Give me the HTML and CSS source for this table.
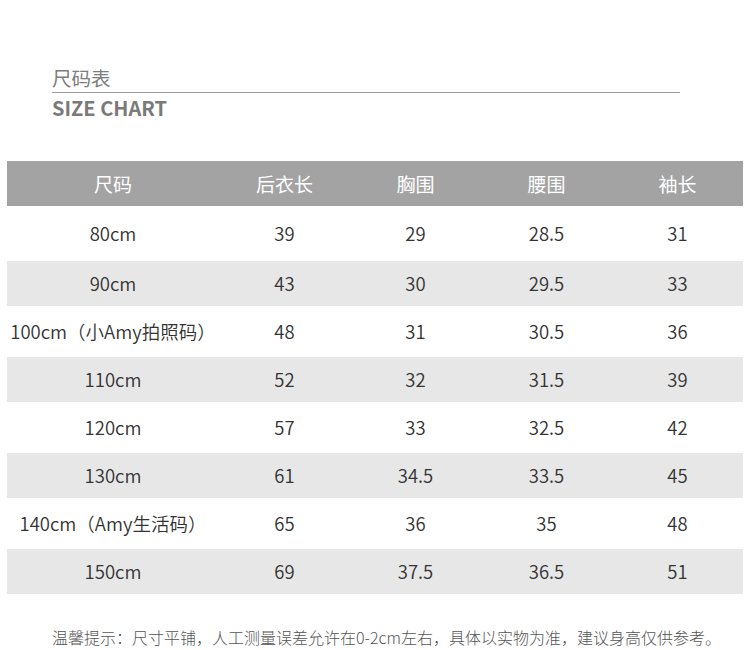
FILE: index.html
```html
<!DOCTYPE html>
<html lang="zh-CN">
<head>
<meta charset="utf-8">
<title>尺码表</title>
<link rel="stylesheet" href="styles.css">
</head>
<body>
<div class="page">
  <header class="heading">
    <div class="title-cn">尺码表</div>
    <div class="title-en">SIZE CHART</div>
  </header>
  <table class="chart">
    <thead>
      <tr><th class="c1">尺码</th><th>后衣长</th><th>胸围</th><th>腰围</th><th>袖长</th></tr>
    </thead>
    <tbody>
      <tr class="first"><td>80cm</td><td>39</td><td>29</td><td>28.5</td><td>31</td></tr>
      <tr class="alt"><td>90cm</td><td>43</td><td>30</td><td>29.5</td><td>33</td></tr>
      <tr><td>100cm（小Amy拍照码）</td><td>48</td><td>31</td><td>30.5</td><td>36</td></tr>
      <tr class="alt"><td>110cm</td><td>52</td><td>32</td><td>31.5</td><td>39</td></tr>
      <tr><td>120cm</td><td>57</td><td>33</td><td>32.5</td><td>42</td></tr>
      <tr class="alt"><td>130cm</td><td>61</td><td>34.5</td><td>33.5</td><td>45</td></tr>
      <tr><td>140cm（Amy生活码）</td><td>65</td><td>36</td><td>35</td><td>48</td></tr>
      <tr class="alt"><td>150cm</td><td>69</td><td>37.5</td><td>36.5</td><td>51</td></tr>
    </tbody>
  </table>
  <p class="note">温馨提示：尺寸平铺，人工测量误差允许在0-2cm左右，具体以实物为准，建议身高仅供参考。</p>
</div>
</body>
</html>
```

FILE: styles.css
```css
html, body {
  margin: 0;
  padding: 0;
  background: #fff;
}

body {
  font-family: "Noto Sans CJK SC", "Noto Sans", sans-serif;
  color: #333;
}

.page {
  width: 750px;
  height: 650px;
  overflow: hidden;
}

.heading {
  margin: 64px 0 0 52px;
  width: 628px;
}

.title-cn {
  font-size: 19.5px;
  line-height: 28px;
  height: 29px;
  color: #7d7d7d;
  font-weight: 400;
  border-bottom: 1px solid #9a9a9a;
  box-sizing: border-box;
}

.title-en {
  font-size: 20px;
  line-height: 30px;
  font-weight: 700;
  color: #7a7a7a;
}

.chart {
  margin: 38px 0 0 7px;
  width: 736px;
  border-collapse: collapse;
  table-layout: fixed;
}

.chart th,
.chart td {
  padding: 0 0 1px 0;
  text-align: center;
  white-space: nowrap;
  width: 131px;
}

.chart th.c1 {
  width: 212px;
}

.chart th {
  background: #a3a3a3;
  color: #fff;
  font-weight: 400;
  font-size: 19px;
  height: 44px;
}

.chart td {
  height: 50px;
  font-size: 18.5px;
  font-weight: 350;
  color: #333;
}

.chart tr.first td {
  height: 54px;
}

.chart tr.alt td {
  background: #e7e7e7;
  height: 44px;
}

.note {
  margin: 31px 0 0 52px;
  font-size: 16px;
  line-height: 24px;
  color: #555;
  font-weight: 300;
  white-space: nowrap;
}
```
